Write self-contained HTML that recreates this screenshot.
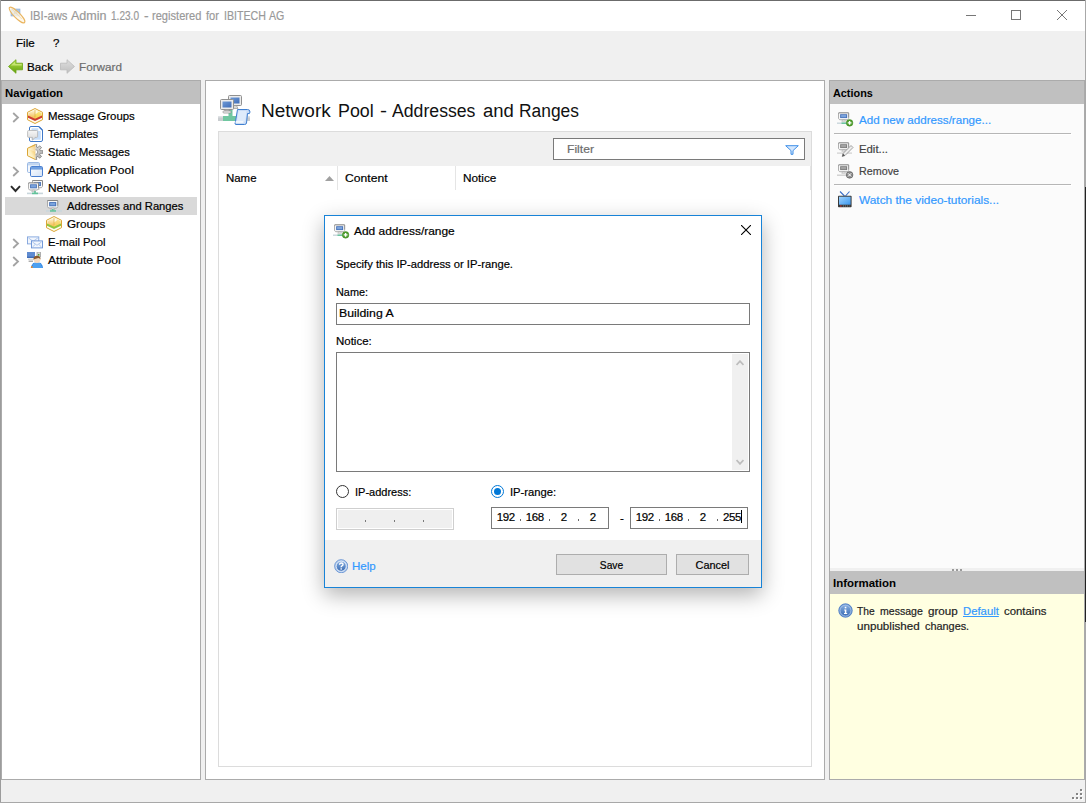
<!DOCTYPE html>
<html><head><meta charset="utf-8">
<style>
*{box-sizing:border-box;margin:0;padding:0}
html,body{width:1086px;height:803px;overflow:hidden;background:#f0f0f0}
body{font-family:"Liberation Sans",sans-serif;font-size:11.5px;color:#000;position:relative}
.a{position:absolute}
.t{position:absolute;white-space:nowrap;line-height:16px;height:16px;-webkit-text-stroke:.2px}
.b{font-weight:bold;-webkit-text-stroke:0}#ctitle{-webkit-text-stroke:0}
.hdr{position:absolute;background:#c0c0c0;height:23px}
.link{color:#3399ff}
.sep{position:absolute;height:1px;background:#b6b6b6;box-shadow:1px 1px 0 #fff}
</style></head><body>

<svg width="0" height="0" style="position:absolute">
<defs>
<linearGradient id="gGold" x1="0" y1="0" x2="1" y2="1"><stop offset="0" stop-color="#fdeeb5"/><stop offset="1" stop-color="#eeb13f"/></linearGradient>
<linearGradient id="gGoldH" x1="0" y1="0" x2="1" y2="0"><stop offset="0" stop-color="#fdf0c4"/><stop offset="1" stop-color="#f0b848"/></linearGradient>
<linearGradient id="gBoxTop" x1="0" y1="0" x2="0" y2="1"><stop offset="0" stop-color="#fff8dc"/><stop offset="1" stop-color="#f0b43c"/></linearGradient>
<linearGradient id="gBub" x1="0" y1="0" x2="0" y2="1"><stop offset="0" stop-color="#f6f6f6"/><stop offset="1" stop-color="#d8d8d8"/></linearGradient>
<linearGradient id="gGoldD" x1="0" y1="1" x2="1" y2="0"><stop offset="0" stop-color="#fffdf0"/><stop offset=".45" stop-color="#fdeebc"/><stop offset="1" stop-color="#eeb03a"/></linearGradient>
<linearGradient id="gGear" x1="0" y1="0" x2="0" y2="1"><stop offset="0" stop-color="#d9d9d9"/><stop offset="1" stop-color="#b0b0b0"/></linearGradient>
<linearGradient id="gScr" x1="0" y1="0" x2="1" y2="1"><stop offset="0" stop-color="#6f9ad6"/><stop offset="1" stop-color="#3f6db8"/></linearGradient>
<linearGradient id="gScrG" x1="0" y1="0" x2="1" y2="1"><stop offset="0" stop-color="#9a9a9a"/><stop offset="1" stop-color="#787878"/></linearGradient>
<linearGradient id="gGreen" x1="0" y1="0" x2="0" y2="1"><stop offset="0" stop-color="#b7e04a"/><stop offset="1" stop-color="#5f9f0c"/></linearGradient>
<linearGradient id="gGrey" x1="0" y1="0" x2="0" y2="1"><stop offset="0" stop-color="#dedede"/><stop offset="1" stop-color="#bfbfbf"/></linearGradient>
<linearGradient id="gBlueBall" x1="0" y1="0" x2="0" y2="1"><stop offset="0" stop-color="#86aee0"/><stop offset="1" stop-color="#3a6cb4"/></linearGradient>
<linearGradient id="gWin" x1="0" y1="0" x2="1" y2="1"><stop offset="0" stop-color="#ffffff"/><stop offset="1" stop-color="#d3e2f6"/></linearGradient>
<linearGradient id="gTv" x1="0" y1="0" x2="1" y2="1"><stop offset="0" stop-color="#9fd3ff"/><stop offset="1" stop-color="#3b97ee"/></linearGradient>
<clipPath id="hx"><path d="M8 .5 15.5 4.3V11.7L8 15.5 .5 11.7V4.3Z"/></clipPath>

<symbol id="iBoxRed" viewBox="0 0 16 16">
 <path d="M8 .500 15.500 4.300V11.700L8 15.500 .500 11.700V4.300Z" fill="#fffbea"/>
 <g clip-path="url(#hx)">
  <path d="M8 2 14.600 5V8.300L8 11.300 1.400 8.300V5Z" fill="url(#gBoxTop)"/>
  <path d="M8 2 14.600 5V8.300L8 11.300Z" fill="#f7e24a" opacity=".55"/>
  <path d="M8 2 11.500 3.700 8.300 6.500Z" fill="#fff" opacity=".75"/>
  <path d="M8 2V9" stroke="#d9a338" stroke-width=".7" opacity=".8"/>
  <path d="M1 7.600 8 10.800 15 7.600V9.800L8 13 1 9.800Z" fill="#cd3d30"/>
 </g>
 <path d="M8 .500 15.500 4.300V11.700L8 15.500 .500 11.700V4.300Z" fill="none" stroke="#dba535"/>
</symbol>
<symbol id="iBoxGreen" viewBox="0 0 16 16">
 <path d="M8 .500 15.500 4.300V11.700L8 15.500 .500 11.700V4.300Z" fill="#fffbea"/>
 <g clip-path="url(#hx)">
  <path d="M8 2 14.600 5V8.300L8 11.300 1.400 8.300V5Z" fill="url(#gBoxTop)"/>
  <path d="M8 2 14.600 5V8.300L8 11.300Z" fill="#f5d860" opacity=".55"/>
  <path d="M8 2 11.500 3.700 8.300 6.500Z" fill="#fff" opacity=".75"/>
  <path d="M8 2V9" stroke="#d9a338" stroke-width=".7" opacity=".8"/>
  <path d="M1 7.600 8 10.800 15 7.600V9.800L8 13 1 9.800Z" fill="#8fc63d"/>
 </g>
 <path d="M8 .500 15.500 4.300V11.700L8 15.500 .500 11.700V4.300Z" fill="none" stroke="#dba535"/>
</symbol>
<symbol id="iTpl" viewBox="0 0 16 16">
 <path d="M4 .500H12L15.500 4V14A1.500 1.500 0 0 1 14 15.500H4A1.500 1.500 0 0 1 2.500 14V2A1.500 1.500 0 0 1 4 .500Z" fill="#fff" stroke="#3f78c8"/>
 <path d="M4.500 2.300H11.300V5H13.800V13.800H4.500Z" fill="#c6defa"/>
 <path d="M12 .800 15.200 4" stroke="#3f78c8" stroke-width="1.300"/>
 <path d="M1.600 4.500H9.600A1 1 0 0 1 10.600 5.500V10.400A1 1 0 0 1 9.600 11.400H8L5.400 14.300V11.400H1.600A1 1 0 0 1 .600 10.400V5.500A1 1 0 0 1 1.600 4.500Z" fill="url(#gBub)" stroke="#b3b3b3" stroke-width=".8"/>
</symbol>
<symbol id="iStatic" viewBox="0 0 16 16">
 <clipPath id="gc"><rect x="8.300" y="0" width="8" height="16"/></clipPath>
 <g clip-path="url(#gc)"><path d="M15.77 6.58 15.77 9.42 13.36 9.21 12.73 10.72 14.59 12.27 12.57 14.29 11.02 12.43 9.51 13.06 9.72 15.47 6.88 15.47 7.09 13.06 5.58 12.43 4.03 14.29 2.01 12.27 3.87 10.72 3.24 9.21 0.83 9.42 0.83 6.58 3.24 6.79 3.87 5.28 2.01 3.73 4.03 1.71 5.58 3.57 7.09 2.94 6.88 0.53 9.72 0.53 9.51 2.94 11.02 3.57 12.57 1.71 14.59 3.73 12.73 5.28 13.36 6.79Z" fill="url(#gGear)" stroke="#7d7d7d" stroke-width=".8"/>
 <circle cx="8.3" cy="8" r="2.400" fill="#fdfdfd" stroke="#8a8a8a" stroke-width=".7"/></g>
 <path d="M8.300 .500 .500 4.300V11.700L8.300 15.500Z" fill="url(#gGoldD)"/>
 <path d="M8.300 .500 .500 4.300V11.700L8.300 15.500" fill="none" stroke="#dba535"/>
 <path d="M8.300 1.500 1.400 4.900 8.300 8Z" fill="#fff" opacity=".35"/>
</symbol>
<symbol id="iApp" viewBox="0 0 16 16">
 <rect x=".5" y=".5" width="12" height="10" rx="1.2" fill="#f4f8fd" stroke="#9bb9e4"/>
 <rect x="1" y="1" width="11" height="2.4" fill="#c2d6f1"/>
 <rect x="3.5" y="4.5" width="12" height="10" rx="1.2" fill="url(#gWin)" stroke="#4a7fd0"/>
 <path d="M4 5H15V7.6H4Z" fill="#6f9fe0"/>
</symbol>
<symbol id="iMon" viewBox="0 0 12 11" preserveAspectRatio="none">
 <path d="M1.200 .500H10.800A.700 .700 0 0 1 11.500 1.200V7L10.300 8.500H1.700L.500 7V1.200A.700 .700 0 0 1 1.200 .500Z" fill="#f7f7f7" stroke="#9c9c9c" stroke-width=".9"/>
 <path d="M.500 1.200A.700 .700 0 0 1 1.200 .500H10.800A.700 .700 0 0 1 11.500 1.200V6" fill="none" stroke="#7c7c7c" stroke-width=".9"/>
 <rect x="2.300" y="2.200" width="7.400" height="4.400" fill="#4470b8"/>
 <rect x="3.300" y="3.100" width="5.400" height="2.600" fill="#7ba3dc"/>
 <path d="M4.800 8.500H7.200L8 10.300H4Z" fill="#e6e6e6" stroke="#9a9a9a" stroke-width=".5"/>
</symbol>
<symbol id="iMonG" viewBox="0 0 12 11" preserveAspectRatio="none">
 <path d="M1.200 .500H10.800A.700 .700 0 0 1 11.500 1.200V7L10.300 8.500H1.700L.500 7V1.200A.700 .700 0 0 1 1.200 .500Z" fill="#f7f7f7" stroke="#9c9c9c" stroke-width=".9"/>
 <path d="M.500 1.200A.700 .700 0 0 1 1.200 .500H10.800A.700 .700 0 0 1 11.500 1.200V6" fill="none" stroke="#7c7c7c" stroke-width=".9"/>
 <rect x="2.300" y="2.200" width="7.400" height="4.400" fill="#7a7a7a"/>
 <rect x="3.300" y="3.100" width="5.400" height="2.600" fill="#a3a3a3"/>
 <path d="M4.800 8.500H7.200L8 10.300H4Z" fill="#e6e6e6" stroke="#9a9a9a" stroke-width=".5"/>
</symbol>
<symbol id="iNet" viewBox="0 0 16 16">
 <use href="#iMon" x="5" y="1" width="11" height="10"/>
 <use href="#iMon" x="1" y="3.3" width="11" height="10"/>
 <rect x="0" y="13.6" width="16" height="1.6" fill="#c9d6dc"/>
 <rect x="5" y="13.6" width="6" height="1.6" fill="#62c39a"/>
 <rect x="7.2" y="12" width="1.6" height="2" fill="#62c39a"/>
</symbol>
<symbol id="iAddr" viewBox="0 0 16 16">
 <use href="#iMon" x="1" y="2" width="11.4" height="10.4"/>
 <rect x="0" y="12.2" width="16" height="1.5" fill="#c9d6dc"/>
 <rect x="4" y="12.2" width="6" height="1.5" fill="#62c39a"/>
 <rect x="6" y="11" width="1.6" height="1.6" fill="#62c39a"/>
</symbol>
<symbol id="iMail" viewBox="0 0 16 16">
 <rect x=".500" y=".900" width="11.300" height="7" fill="#f2f6fd" stroke="#7fa3dc" stroke-width=".9"/>
 <path d="M1.500 2 6.100 5.300 10.800 2" fill="none" stroke="#9dbae6" stroke-width=".8"/>
 <rect x="4.500" y="4.900" width="11" height="7" fill="#f2f6fd" stroke="#6690d6" stroke-width=".9"/>
 <path d="M5.500 6 10 9.300 14.500 6M5.500 11 8.300 8.300M14.500 11 11.700 8.300" fill="none" stroke="#9dbae6" stroke-width=".8"/>
</symbol>
<symbol id="iAttr" viewBox="0 0 16 16">
 <rect x="0" y="0" width="8" height="6" fill="#5f8bd0"/>
 <rect x="0" y="4.6" width="8" height="1.4" fill="#3f6db8"/>
 <rect x="1" y="6.6" width="6" height="1.2" fill="#cfcfcf"/>
 <rect x="1.6" y="8.6" width="4.4" height="1.2" fill="#9a9a9a"/>
 <rect x="10" y="0" width="3.6" height="5" fill="#d6d6d6" stroke="#8a8a8a" stroke-width=".6"/>
 <rect x="11" y="2" width="1.4" height="1.6" fill="#4aa832"/>
 <path d="M4 16Q4.5 11 8 10.5H12Q15.5 11 16 16Z" fill="#4da0f0"/>
 <path d="M4.2 15.5 6.5 11.3M15.8 15.500 13.500 11.300" stroke="#2a6fd0" stroke-width=".8" stroke-dasharray="1 1"/>
 <rect x="4" y="14.300" width="1.600" height="1.700" fill="#e8892a"/>
 <ellipse cx="10" cy="7.600" rx="3.300" ry="3.400" fill="#f6d9bd"/>
 <path d="M6.500 7.500Q6.300 3.800 10 3.800T13.500 7.500Q12 5.800 10.500 6.200T6.500 7.500Z" fill="#8c5a2b"/>
</symbol>
<symbol id="iAdd" viewBox="0 0 17 16">
 <use href="#iMon" x="1" y=".300" width="11.300" height="9.600"/>
 <rect x="0" y="10.500" width="11" height="1.400" fill="#c9d6dc"/>
 <rect x="4.500" y="10.500" width="5" height="1.400" fill="#62c39a"/>
 <circle cx="12.600" cy="10.900" r="3.300" fill="#4f9e2c" stroke="#3f8520" stroke-width=".5"/>
 <path d="M12.600 9V12.800M10.700 10.900H14.500" stroke="#fff" stroke-width="1.400"/>
</symbol>
<symbol id="iEdit" viewBox="0 0 17 16">
 <use href="#iMonG" x="1" y=".300" width="11.300" height="9.600"/>
 <rect x="0" y="10.500" width="15" height="1.200" fill="#cfcfcf"/>
 <path d="M14 3.500 16 5.500 8 13.500 5.200 14.500 6 11.500Z" fill="#ededed" stroke="#8a8a8a" stroke-width=".8"/>
 <path d="M5.200 14.500 6 11.500 8 13.500Z" fill="#555"/>
</symbol>
<symbol id="iRem" viewBox="0 0 17 16">
 <use href="#iMonG" x="1" y=".300" width="11.300" height="9.600"/>
 <rect x="0" y="10.500" width="11" height="1.400" fill="#cfcfcf"/>
 <circle cx="12.600" cy="10.900" r="3.300" fill="#8a8a8a" stroke="#5e5e5e" stroke-width=".7"/>
 <path d="M11 9.300 14.200 12.500M14.200 9.300 11 12.500" stroke="#fff" stroke-width="1"/>
</symbol>
<symbol id="iTv" viewBox="0 0 16 17">
 <path d="M3 .5 7.500 5M12.500 .5 8.500 5" stroke="#3a6fc8" stroke-width="1.100" fill="none"/>
 <rect x="1" y="4.700" width="13.600" height="11.500" rx=".8" fill="#3a3a3a"/>
 <rect x="2" y="5.700" width="11.600" height="8" fill="url(#gTv)"/>
 <rect x="3" y="14.500" width="1.600" height="1" fill="#e03030"/>
 <path d="M6 15H12.500" stroke="#9a9a9a" stroke-width=".8" stroke-dasharray="1 1"/>
</symbol>
<symbol id="iHelp" viewBox="0 0 16 16">
 <circle cx="8" cy="8" r="7.300" fill="#b4cdee" stroke="#5b8bd0" stroke-width=".9"/>
 <circle cx="8" cy="8" r="5.600" fill="url(#gBlueBall)" stroke="#eef4fc" stroke-width=".9"/>
 <path d="M6.100 6.400Q6.200 4.400 8.100 4.400T10 6.100Q10 7.200 8.900 7.700T8 9.200" fill="none" stroke="#fff" stroke-width="1.500"/>
 <rect x="7.200" y="10.300" width="1.600" height="1.500" fill="#fff"/>
</symbol>
<symbol id="iInfo" viewBox="0 0 16 16">
 <circle cx="8" cy="8" r="7.200" fill="#5b8bd0" stroke="#4274c0" stroke-width=".8"/>
 <circle cx="8" cy="8" r="5.900" fill="url(#gBlueBall)" stroke="#c9dcf3" stroke-width=".7"/>
 <rect x="7.200" y="4" width="1.700" height="1.700" fill="#fff"/>
 <path d="M6.600 6.800H8.900V10.600H9.800V11.800H6.400V10.600H7.300V8H6.600Z" fill="#fff"/>
</symbol>
</defs></svg>
<!-- window frame -->
<div class="a" id="titlebar" style="left:0;top:0;width:1086px;height:31px;background:#fff"></div>
<div class="a" style="left:0;top:0;width:1086px;height:1px;background:#6b6b6b"></div>
<div class="a" style="left:0;top:0;width:1px;height:803px;background:#9c9c9c"></div>
<div class="a" style="left:1085px;top:0;width:1px;height:803px;background:#a8a8a8"></div>
<div class="a" style="left:1085px;top:187px;width:1px;height:435px;background:#222"></div>
<div class="a" style="left:0;top:802px;width:1086px;height:1px;background:#a8a8a8"></div>

<!-- title -->
<div class="t" id="title0" style="left:29.70px;top:8px;color:#999;font-size:12.5px;transform:scaleX(0.8951);transform-origin:0 0">IBI-aws</div>
<div class="t" id="title1" style="left:71.30px;top:8px;color:#999;font-size:12.5px;transform:scaleX(1.0029);transform-origin:0 0">Admin</div>
<div class="t" id="title2" style="left:111.00px;top:8px;color:#999;font-size:12.5px;transform:scaleX(0.8057);transform-origin:0 0">1.23.0</div>
<div class="t" id="title3" style="left:144.20px;top:8px;color:#999;font-size:12.5px;transform:scaleX(1.1000);transform-origin:0 0">-</div>
<div class="t" id="title4" style="left:151.60px;top:8px;color:#999;font-size:12.5px;transform:scaleX(0.8875);transform-origin:0 0">registered</div>
<div class="t" id="title5" style="left:206.40px;top:8px;color:#999;font-size:12.5px;transform:scaleX(0.8867);transform-origin:0 0">for</div>
<div class="t" id="title6" style="left:224.05px;top:8px;color:#999;font-size:12.5px;transform:scaleX(0.8500);transform-origin:0 0">IBITECH</div>
<div class="t" id="title7" style="left:269.40px;top:8px;color:#999;font-size:12.5px;transform:scaleX(0.8500);transform-origin:0 0">AG</div>

<!-- menu -->
<div class="t" id="mfile" style="left:16px;top:35px;transform:scaleX(1.0091);transform-origin:0 0">File</div>
<div class="t" id="mq" style="left:53px;top:35px">?</div>
<!-- toolbar -->
<div class="t" id="tback" style="left:27px;top:59px;transform:scaleX(1.0165);transform-origin:0 0">Back</div>
<div class="t" id="tfwd" style="left:79px;top:59px;color:#6d6d6d;transform:scaleX(1.0193);transform-origin:0 0">Forward</div>

<!-- navigation panel -->
<div class="a" id="nav" style="left:1px;top:80px;width:200px;height:700px;background:#fff;border:1px solid #ababab"></div>
<div class="hdr" style="left:2px;top:81px;width:198px"></div>
<div class="t b" id="navh" style="left:5px;top:85px;transform:scaleX(0.9864);transform-origin:0 0">Navigation</div>
<div class="a" id="navsel" style="left:5px;top:197px;width:192px;height:18px;background:#d9d9d9"></div>
<div class="t" id="n1" style="left:48px;top:108px;transform:scaleX(0.9911);transform-origin:0 0">Message Groups</div>
<div class="t" id="n2" style="left:48px;top:126px;transform:scaleX(0.9538);transform-origin:0 0">Templates</div>
<div class="t" id="n3" style="left:48px;top:144px;transform:scaleX(0.9695);transform-origin:0 0">Static Messages</div>
<div class="t" id="n4" style="left:48px;top:162px;transform:scaleX(1.0402);transform-origin:0 0">Application Pool</div>
<div class="t" id="n5" style="left:48px;top:180px;transform:scaleX(1.0323);transform-origin:0 0">Network Pool</div>
<div class="t" id="n6" style="left:67px;top:198px;transform:scaleX(0.9735);transform-origin:0 0">Addresses and Ranges</div>
<div class="t" id="n7" style="left:67px;top:216px;transform:scaleX(1.0181);transform-origin:0 0">Groups</div>
<div class="t" id="n8" style="left:48px;top:234px;transform:scaleX(0.9794);transform-origin:0 0">E-mail Pool</div>
<div class="t" id="n9" style="left:48px;top:252px;transform:scaleX(1.0515);transform-origin:0 0">Attribute Pool</div>

<!-- center panel -->
<div class="a" id="center" style="left:205px;top:80px;width:620px;height:700px;background:#fff;border:1px solid #ababab"></div>
<div class="t" id="ctitle0" style="left:261.44px;top:99px;font-size:18px;line-height:24px;height:24px;color:#111;-webkit-text-stroke:0;transform:scaleX(1.0569);transform-origin:0 0">Network</div>
<div class="t" id="ctitle1" style="left:337.71px;top:99px;font-size:18px;line-height:24px;height:24px;color:#111;-webkit-text-stroke:0;transform:scaleX(0.9912);transform-origin:0 0">Pool</div>
<div class="t" id="ctitle2" style="left:380.00px;top:99px;font-size:18px;line-height:24px;height:24px;color:#111;-webkit-text-stroke:0;transform:scaleX(1.1667);transform-origin:0 0">-</div>
<div class="t" id="ctitle3" style="left:392.40px;top:99px;font-size:18px;line-height:24px;height:24px;color:#111;-webkit-text-stroke:0;transform:scaleX(0.9812);transform-origin:0 0">Addresses</div>
<div class="t" id="ctitle4" style="left:482.60px;top:99px;font-size:18px;line-height:24px;height:24px;color:#111;-webkit-text-stroke:0;transform:scaleX(1.0276);transform-origin:0 0">and</div>
<div class="t" id="ctitle5" style="left:519.43px;top:99px;font-size:18px;line-height:24px;height:24px;color:#111;-webkit-text-stroke:0;transform:scaleX(0.9656);transform-origin:0 0">Ranges</div>
<div class="a" id="listbox" style="left:218px;top:131px;width:594px;height:636px;background:#fff;border:1px solid #dcdcdc"></div>
<div class="a" id="filterbar" style="left:219px;top:132px;width:592px;height:34px;background:#f0f0f0"></div>
<div class="a" id="filter" style="left:553px;top:138px;width:252px;height:22px;background:#fff;border:1px solid #7a7a7a"></div>
<div class="t" id="filtert" style="left:567px;top:141px;color:#6d6d6d;transform:scaleX(1.0562);transform-origin:0 0">Filter</div>
<div class="a" style="left:337px;top:166px;width:1px;height:24px;background:#e5e5e5"></div>
<div class="a" style="left:455px;top:166px;width:1px;height:24px;background:#e5e5e5"></div>
<div class="a" style="left:810px;top:166px;width:1px;height:24px;background:#e5e5e5"></div>
<div class="t" id="c1" style="left:226px;top:170px;transform:scaleX(0.9939);transform-origin:0 0">Name</div>
<div class="t" id="c2" style="left:345px;top:170px;transform:scaleX(1.0551);transform-origin:0 0">Content</div>
<div class="t" id="c3" style="left:463px;top:170px;transform:scaleX(1.0242);transform-origin:0 0">Notice</div>

<!-- actions panel -->
<div class="a" id="actions" style="left:829px;top:80px;width:256px;height:492px;background:#fbfbfb;border:1px solid #ababab;border-bottom:0"></div>
<div class="hdr" style="left:830px;top:81px;width:254px"></div>
<div class="t b" id="acth" style="left:833px;top:85px;transform:scaleX(0.9438);transform-origin:0 0">Actions</div>
<div class="t link" id="a1" style="left:859px;top:112px;transform:scaleX(1.0087);transform-origin:0 0">Add new address/range...</div>
<div class="sep" style="left:834px;top:133px;width:237px"></div>
<div class="t" id="a2" style="left:859px;top:141px;color:#444;transform:scaleX(0.9862);transform-origin:0 0">Edit...</div>
<div class="t" id="a3" style="left:859px;top:163px;color:#444;transform:scaleX(0.934);transform-origin:0 0">Remove</div>
<div class="sep" style="left:834px;top:184px;width:237px"></div>
<div class="t link" id="a4" style="left:859px;top:192px;transform:scaleX(1.0315);transform-origin:0 0">Watch the video-tutorials...</div>

<div class="a" style="left:830px;top:568px;width:254px;height:3px;background:#f0f0f0"></div>
<!-- info panel -->
<div class="a" id="info" style="left:829px;top:571px;width:256px;height:209px;background:#ffffe1;border:1px solid #ababab;border-top:0"></div>
<div class="hdr" style="left:830px;top:571px;width:254px"></div>
<div class="t b" id="infh" style="left:833px;top:575px;transform:scaleX(0.996);transform-origin:0 0">Information</div>
<div class="t" id="i10" style="left:857.30px;top:603px;color:#222;transform:scaleX(0.8900);transform-origin:0 0">The</div>
<div class="t" id="i11" style="left:880.00px;top:603px;color:#222;transform:scaleX(0.9170);transform-origin:0 0">message</div>
<div class="t" id="i12" style="left:927.90px;top:603px;color:#222;transform:scaleX(1.0133);transform-origin:0 0">group</div>
<div class="t" id="i13" style="left:963.10px;top:603px;color:#222;color:#3399ff;text-decoration:underline;transform:scaleX(0.9838);transform-origin:0 0">Default</div>
<div class="t" id="i14" style="left:1003.70px;top:603px;color:#222;transform:scaleX(0.9907);transform-origin:0 0">contains</div>
<div class="t" id="i20" style="left:857.30px;top:618px;color:#222;transform:scaleX(1.0113);transform-origin:0 0">unpublished</div>
<div class="t" id="i21" style="left:925.40px;top:618px;color:#222;transform:scaleX(0.9457);transform-origin:0 0">changes.</div>

<svg class="a" id="ticon" style="left:8px;top:6px" width="18" height="18" viewBox="0 0 18 18">
<rect x="3" y="3" width="9" height="7" fill="#a9c5e6" stroke="#8fb0d8" stroke-width=".6"/>
<path d="M5.800 8.600 7.500 4.300 9.200 8.600M6.400 7.200H8.600" fill="none" stroke="#7a6a3a" stroke-width=".8"/>
<ellipse cx="9" cy="9" rx="10.600" ry="2.900" transform="rotate(45 9 9)" fill="#fdf6e8" fill-opacity=".8" stroke="#eab560" stroke-width="1.100"/>
<path d="M3.500 2.600 13.800 13" stroke="#f6d9a6" stroke-width=".8"/>
</svg>
<div class="a" style="left:966px;top:15px;width:10px;height:1px;background:#777"></div>
<div class="a" style="left:1011px;top:10px;width:10px;height:10px;border:1px solid #777"></div>
<svg class="a" style="left:1057px;top:10px" width="10" height="10" viewBox="0 0 10 10"><path d="M0 0 10 10M10 0 0 10" stroke="#777" stroke-width="1"/></svg>
<svg class="a" id="aback" style="left:8px;top:59px" width="15" height="15" viewBox="0 0 15 15"><path d="M.5 7.500 8 .7V4.200H14.500V10.800H8V14.300Z" fill="url(#gGreen)" stroke="#6aa512" stroke-width=".8"/><path d="M2 7.200 7.200 2.600V5H13.700V6.500H2.800Z" fill="#d8f08a" opacity=".7"/></svg>
<svg class="a" id="afwd" style="left:60px;top:59px" width="15" height="15" viewBox="0 0 15 15"><path d="M14.500 7.500 7 .7V4.200H.5V10.800H7V14.300Z" fill="url(#gGrey)" stroke="#bababa" stroke-width=".8"/></svg>
<svg class="a"  style="left:27px;top:108px" width="16" height="16"><use href="#iBoxRed" width="16" height="16"/></svg>
<svg class="a"  style="left:27px;top:126px" width="16" height="16"><use href="#iTpl" width="16" height="16"/></svg>
<svg class="a"  style="left:27px;top:144px" width="16" height="16"><use href="#iStatic" width="16" height="16"/></svg>
<svg class="a"  style="left:27px;top:162px" width="16" height="16"><use href="#iApp" width="16" height="16"/></svg>
<svg class="a"  style="left:27px;top:179px" width="16" height="16"><use href="#iNet" width="16" height="16"/></svg>
<svg class="a"  style="left:46px;top:198px" width="16" height="16"><use href="#iAddr" width="16" height="16"/></svg>
<svg class="a"  style="left:46px;top:216px" width="16" height="16"><use href="#iBoxGreen" width="16" height="16"/></svg>
<svg class="a"  style="left:27px;top:235.500px" width="16" height="16"><use href="#iMail" width="16" height="16"/></svg>
<svg class="a"  style="left:27px;top:252px" width="16" height="16"><use href="#iAttr" width="16" height="16"/></svg>
<svg class="a" style="left:12px;top:112px" width="8" height="11" viewBox="0 0 8 11"><path d="M1.200 1 6 5.500 1.200 10" fill="none" stroke="#a3a3a3" stroke-width="1.800"/></svg>
<svg class="a" style="left:12px;top:166px" width="8" height="11" viewBox="0 0 8 11"><path d="M1.200 1 6 5.500 1.200 10" fill="none" stroke="#a3a3a3" stroke-width="1.800"/></svg>
<svg class="a" style="left:10px;top:185px" width="11" height="8" viewBox="0 0 11 8"><path d="M1 1.200 5.500 6 10 1.200" fill="none" stroke="#2b2b2b" stroke-width="1.900"/></svg>
<svg class="a" style="left:12px;top:238px" width="8" height="11" viewBox="0 0 8 11"><path d="M1.200 1 6 5.500 1.200 10" fill="none" stroke="#a3a3a3" stroke-width="1.800"/></svg>
<svg class="a" style="left:12px;top:256px" width="8" height="11" viewBox="0 0 8 11"><path d="M1.200 1 6 5.500 1.200 10" fill="none" stroke="#a3a3a3" stroke-width="1.800"/></svg>
<svg class="a" id="bigicon" style="left:218px;top:94px" width="33" height="32" viewBox="0 0 33 32">
<rect x="0" y="22" width="32" height="5" fill="#c9cdd0"/>
<rect x="0" y="22" width="32" height="1.500" fill="#dfe2e4"/>
<rect x="5" y="22" width="14" height="5" fill="#70c7a1"/>
<rect x="10.500" y="16" width="4" height="6.500" fill="#70c7a1"/>
<g><rect x="10.500" y="1.500" width="13" height="10" rx="1" fill="#ececec" stroke="#909090"/><rect x="12.500" y="3.500" width="9" height="6" fill="url(#gScr)"/><path d="M15.500 11.500H18.500L20 14.500H14Z" fill="#d8d8d8" stroke="#8a8a8a" stroke-width=".6"/></g>
<g><rect x="2.500" y="5.500" width="13" height="10" rx="1" fill="#ececec" stroke="#909090"/><rect x="4.500" y="7.500" width="9" height="6" fill="url(#gScr)"/><path d="M7.500 15.500H10.500L11.500 17H6.500Z" fill="#d8d8d8" stroke="#8a8a8a" stroke-width=".6"/><rect x="5" y="17" width="8" height="2" rx=".8" fill="#f4f4f4" stroke="#8a8a8a" stroke-width=".7"/></g>
<path d="M19.500 15.500H29.500Q32 15.500 32 18T29.500 19.500L28.500 29Q28.300 30.500 26.500 30.500H18Q16.300 30.300 17.300 28.500Z" fill="#c9dcf6" stroke="#3f7fd0" stroke-width="1"/>
<path d="M20.500 17H28.500L27.300 27.500H19Z" fill="#deebfb"/>
<path d="M17.500 28H25.500" stroke="#fff" stroke-width="1.400"/>
</svg>
<svg class="a" id="funnel" style="left:785px;top:144.500px" width="14" height="10" viewBox="0 0 14 10"><path d="M.700 .700H13.300L8 5.600V9.300H6V5.600Z" fill="#d4e7fd" stroke="#3f8fe8" stroke-width="1"/></svg>
<svg class="a" style="left:325px;top:176px" width="9" height="5" viewBox="0 0 9 5"><path d="M0 5 4.500 0 9 5Z" fill="#a0a0a0"/></svg>
<svg class="a"  style="left:837px;top:112px" width="17" height="16"><use href="#iAdd" width="17" height="16"/></svg>
<svg class="a"  style="left:837px;top:142px" width="17" height="16"><use href="#iEdit" width="17" height="16"/></svg>
<svg class="a"  style="left:837px;top:164px" width="17" height="16"><use href="#iRem" width="17" height="16"/></svg>
<svg class="a"  style="left:837px;top:190.5px" width="16" height="17"><use href="#iTv" width="16" height="17"/></svg>
<svg class="a"  style="left:837.5px;top:602.5px" width="15" height="15"><use href="#iInfo" width="15" height="15"/></svg>
<div class="a" style="left:952px;top:569px;width:2px;height:2px;background:#9a9a9a;box-shadow:4px 0 #9a9a9a,8px 0 #9a9a9a"></div>
<svg class="a" style="left:1071px;top:788px" width="13" height="13" viewBox="0 0 13 13"><g fill="#fff"><rect x="10" y="2" width="2" height="2"/><rect x="10" y="6" width="2" height="2"/><rect x="6" y="6" width="2" height="2"/><rect x="10" y="10" width="2" height="2"/><rect x="6" y="10" width="2" height="2"/><rect x="2" y="10" width="2" height="2"/></g><g fill="#858585"><rect x="9" y="1" width="2" height="2"/><rect x="9" y="5" width="2" height="2"/><rect x="5" y="5" width="2" height="2"/><rect x="9" y="9" width="2" height="2"/><rect x="5" y="9" width="2" height="2"/><rect x="1" y="9" width="2" height="2"/></g></svg>
<!-- dialog -->
<div class="a" id="dlg" style="left:324px;top:215px;width:438px;height:373px;background:#fff;border:1px solid #1883d7;box-shadow:0 7px 20px rgba(0,0,0,.30)"></div>
<div class="a" id="dlgfoot" style="left:325px;top:540px;width:436px;height:47px;background:#f0f0f0"></div>
<div class="t" id="dt" style="left:354px;top:223px;transform:scaleX(1.0361);transform-origin:0 0">Add address/range</div>
<div class="t" id="d1" style="left:336px;top:256px;transform:scaleX(0.975);transform-origin:0 0">Specify this IP-address or IP-range.</div>
<div class="t" id="d2" style="left:336px;top:284px;transform:scaleX(0.9446);transform-origin:0 0">Name:</div>
<div class="a" id="inp1" style="left:336px;top:303px;width:414px;height:22px;background:#fff;border:1px solid #7a7a7a"></div>
<div class="t" id="d3" style="left:339px;top:305px;transform:scaleX(1.0693);transform-origin:0 0">Building A</div>
<div class="t" id="d4" style="left:336px;top:333px;transform:scaleX(0.9973);transform-origin:0 0">Notice:</div>
<div class="a" id="ta" style="left:336px;top:352px;width:414px;height:120px;background:#fff;border:1px solid #7a7a7a"></div>
<div class="a" id="tasb" style="left:732px;top:354px;width:16px;height:116px;background:#f0f0f0"></div>
<div class="t" id="d5" style="left:355px;top:484px;transform:scaleX(0.9573);transform-origin:0 0">IP-address:</div>
<div class="t" id="d6" style="left:510px;top:484px;transform:scaleX(0.9765);transform-origin:0 0">IP-range:</div>
<div class="a" id="ipd" style="left:336px;top:508px;width:118px;height:22px;background:#efefef;border:1px solid #cfcfcf;box-shadow:inset 0 0 0 1px #fff"></div>
<div class="a" id="ip1" style="left:491px;top:507px;width:118px;height:22px;background:#fff;border:1px solid #7a7a7a"></div>
<div class="a" id="ip2" style="left:630px;top:507px;width:118px;height:22px;background:#fff;border:1px solid #7a7a7a"></div>
<div class="t" id="dash" style="left:620px;top:510px">-</div>
<div class="t link" id="help" style="left:352px;top:558px;transform:scaleX(1.0061);transform-origin:0 0">Help</div>
<div class="a" id="bsave" style="left:556px;top:554px;width:111px;height:21px;background:#e1e1e1;border:1px solid #adadad"></div>
<div class="a" id="bcancel" style="left:676px;top:554px;width:73px;height:21px;background:#e1e1e1;border:1px solid #adadad"></div>
<div class="t" id="tsave" style="left:556px;top:557px;width:111px;text-align:center;transform:scaleX(0.8925);transform-origin:50% 0">Save</div>
<div class="t" id="tcancel" style="left:676px;top:557px;width:73px;text-align:center;transform:scaleX(0.9494);transform-origin:50% 0">Cancel</div>
<svg class="a"  style="left:333px;top:223.5px" width="17" height="16"><use href="#iAdd" width="17" height="16"/></svg>
<svg class="a" style="left:741px;top:225px" width="10" height="10" viewBox="0 0 10 10"><path d="M0 0 10 10M10 0 0 10" stroke="#000" stroke-width="1.100"/></svg>
<svg class="a"  style="left:333.6px;top:558.9px" width="14.4" height="14.4"><use href="#iHelp" width="14.4" height="14.4"/></svg>
<div class="a" style="left:336px;top:485px;width:13px;height:13px;border-radius:50%;border:1px solid #333;background:#fff"></div>
<div class="a" style="left:491px;top:485px;width:13px;height:13px;border-radius:50%;border:1px solid #0078d7;background:#fff"></div>
<div class="a" style="left:494px;top:488px;width:7px;height:7px;border-radius:50%;background:#0078d7"></div>
<svg class="a" style="left:736px;top:360px" width="8" height="6" viewBox="0 0 8 6"><path d="M.500 5 4 1.200 7.500 5" fill="none" stroke="#bdbdbd" stroke-width="1.800"/></svg>
<svg class="a" style="left:736px;top:459px" width="8" height="6" viewBox="0 0 8 6"><path d="M.500 1 4 4.800 7.500 1" fill="none" stroke="#bdbdbd" stroke-width="1.800"/></svg>
<div class="t" style="left:491px;top:509px;width:30px;text-align:center;word-spacing:0;letter-spacing:-0.35px;text-indent:-0.35px">192</div>
<div class="t" style="left:520px;top:509px;width:30px;text-align:center;word-spacing:0;letter-spacing:-0.35px;text-indent:-0.35px">168</div>
<div class="t" style="left:549px;top:509px;width:30px;text-align:center;word-spacing:0;letter-spacing:-0.35px;text-indent:-0.35px">2</div>
<div class="t" style="left:578px;top:509px;width:30px;text-align:center;word-spacing:0;letter-spacing:-0.35px;text-indent:-0.35px">2</div>
<div class="t" style="left:630px;top:509px;width:30px;text-align:center;word-spacing:0;letter-spacing:-0.35px;text-indent:-0.35px">192</div>
<div class="t" style="left:659px;top:509px;width:30px;text-align:center;word-spacing:0;letter-spacing:-0.35px;text-indent:-0.35px">168</div>
<div class="t" style="left:688px;top:509px;width:30px;text-align:center;word-spacing:0;letter-spacing:-0.35px;text-indent:-0.35px">2</div>
<div class="t" id="o255" style="left:723px;top:509px;letter-spacing:-0.4px">255</div>
<div class="a" style="left:520px;top:519px;width:1px;height:2px;background:#6a6a6a"></div>
<div class="a" style="left:549px;top:519px;width:1px;height:2px;background:#6a6a6a"></div>
<div class="a" style="left:578px;top:519px;width:1px;height:2px;background:#6a6a6a"></div>
<div class="a" style="left:659px;top:519px;width:1px;height:2px;background:#6a6a6a"></div>
<div class="a" style="left:688px;top:519px;width:1px;height:2px;background:#6a6a6a"></div>
<div class="a" style="left:717px;top:519px;width:1px;height:2px;background:#6a6a6a"></div>
<div class="a" style="left:365px;top:520px;width:1px;height:2px;background:#7a7a7a"></div>
<div class="a" style="left:394px;top:520px;width:1px;height:2px;background:#7a7a7a"></div>
<div class="a" style="left:423px;top:520px;width:1px;height:2px;background:#7a7a7a"></div>
<div class="a" style="left:741px;top:510px;width:1px;height:13px;background:#000"></div>
</body></html>
